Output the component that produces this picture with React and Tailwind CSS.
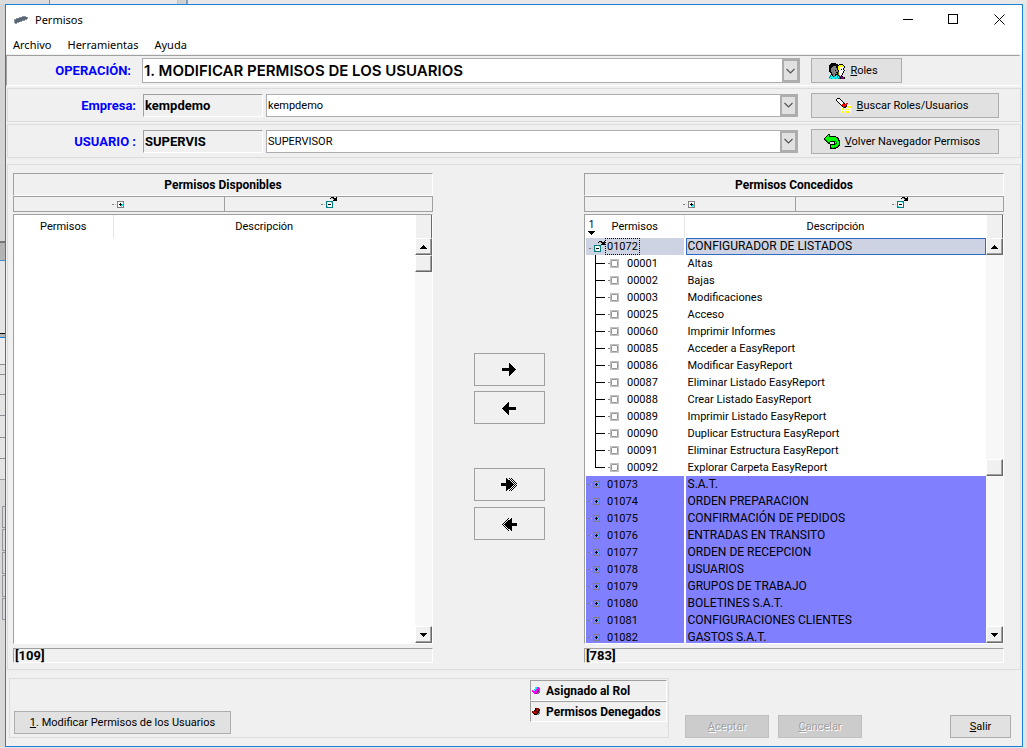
import clsx from 'clsx';

const GRANTED = [
    { code: '01072', name: 'CONFIGURADOR DE LISTADOS', kind: 'open' },
    { code: '00001', name: 'Altas', kind: 'leaf' },
    { code: '00002', name: 'Bajas', kind: 'leaf' },
    { code: '00003', name: 'Modificaciones', kind: 'leaf' },
    { code: '00025', name: 'Acceso', kind: 'leaf' },
    { code: '00060', name: 'Imprimir Informes', kind: 'leaf' },
    { code: '00085', name: 'Acceder a EasyReport', kind: 'leaf' },
    { code: '00086', name: 'Modificar EasyReport', kind: 'leaf' },
    { code: '00087', name: 'Eliminar Listado EasyReport', kind: 'leaf' },
    { code: '00088', name: 'Crear Listado EasyReport', kind: 'leaf' },
    { code: '00089', name: 'Imprimir Listado EasyReport', kind: 'leaf' },
    { code: '00090', name: 'Duplicar Estructura EasyReport', kind: 'leaf' },
    { code: '00091', name: 'Eliminar Estructura EasyReport', kind: 'leaf' },
    { code: '00092', name: 'Explorar Carpeta EasyReport', kind: 'leaf', last: true },
    { code: '01073', name: 'S.A.T.', kind: 'closed' },
    { code: '01074', name: 'ORDEN PREPARACION', kind: 'closed' },
    { code: '01075', name: 'CONFIRMACIÓN DE PEDIDOS', kind: 'closed' },
    { code: '01076', name: 'ENTRADAS EN TRANSITO', kind: 'closed' },
    { code: '01077', name: 'ORDEN DE RECEPCION', kind: 'closed' },
    { code: '01078', name: 'USUARIOS', kind: 'closed' },
    { code: '01079', name: 'GRUPOS DE TRABAJO', kind: 'closed' },
    { code: '01080', name: 'BOLETINES S.A.T.', kind: 'closed' },
    { code: '01081', name: 'CONFIGURACIONES CLIENTES', kind: 'closed' },
    { code: '01082', name: 'GASTOS S.A.T.', kind: 'closed' },
];

const PALETTE = {
    k: '#000000', g: '#808080', a: '#969696', l: '#c0c0c0', w: '#ffffff', y: '#ffff00', o: '#808000',
    r: '#ff0000', m: '#800000', t: '#008080', c: '#00ffff', n: '#00ff00', d: '#008000',
    p: '#800080', f: '#ff00ff', s: '#5a6674', b: '#8b97a3',
};

// Draws a small bitmap, one character per pixel
function Pixels({ rows, className }) {
    return (
        <svg width={rows[0].length} height={rows.length} shapeRendering="crispEdges" className={clsx('shrink-0', className)} aria-hidden="true">
            {rows.map((row, y) =>
                [...row].map((ch, x) => PALETTE[ch] && <rect key={`${x}-${y}`} x={x} y={y} width="1" height="1" fill={PALETTE[ch]} />)
            )}
        </svg>
    );
}

const APP_ICON = [
    '........bbbb..',
    '.....bbssssssb',
    '..bbsssssssssb',
    'bbsssssssssbb.',
    'bsssssssbbb...',
    'bsssssbb......',
    'bssbb.........',
    '.bb...........',
];

const ROLES_ICON = [
    '..kkkkk.........',
    '.kkkkkkkk.kkkk..',
    'kkkkkkkkkkyyyyk.',
    'kkkkgggkkyyyyyyk',
    'kkkggggkkyywwwyk',
    'kkggggggkywwwwk.',
    'kkggggggkywwkwk.',
    'kkggggkggkwwwwwk',
    'kkgggggggkwwwwk.',
    '.kkggggkkowwwwk.',
    '..kgggggkoywwk..',
    '..kkggkkkowwwk..',
    '.tckggkctkowk...',
    'ctcckgcctckppk..',
    'tccccccctctkpppk',
    'cctccctccttkpppk',
];

const SEARCH_ICON = [
    '.kkk...........',
    'kwwwk..........',
    'kwwwwk.........',
    '.kwwwwk........',
    '..kwwwwk.......',
    '...kwwwrk.rr...',
    '....kwrrrrr....',
    '.....krrrrkwwww',
    '......krrkkyywy',
    '.....wwrkkwyywy',
    '.....wyywwwwwww',
    '.....wyywyywyyw',
    '.....wwwwwwwwww',
    '.....wyywyywyyw',
    '.....wyywyywyyw',
];

const BACK_ICON = [
    '....kk..........',
    '...knk..........',
    '..knnkkkkkkk....',
    '.knnnnnnnnnnkk..',
    'knnnnnnnnnnnnkk.',
    'kdnnnnnnnnnnnnk.',
    '.kdnnnnnnnnnnnkk',
    '..kdnnkkkkkdnnnk',
    '...kdk....kcdnnk',
    '....kk....ktdnnk',
    '......kkkkktnnnk',
    '......knnnnnnnkk',
    '......knnnnnndk.',
    '......kdnnddkk..',
    '......kkkkkk....',
];

const EXPAND_ICON = [
    '.....ggggggg',
    '.....gwwwwwg',
    '.....gwwkwwg',
    'gg.l.gwkkkcg',
    '.....gwwkccg',
    '.....gwwwcwg',
    '.....ggggggg',
];

const NODE_ICON = [
    '.....ggggggg',
    '.....g.....g',
    '.....g..k..g',
    'gg.l.g.kkkcg',
    '.....g..kc.g',
    '.....g.....g',
    '.....ggggggg',
];

const COLLAPSE_ICON = [
    '..........kkk..k',
    '.........kllkkkk',
    '............lkkk',
    '............kkkk',
    '.....ttttttt....',
    '.....twwwwct....',
    '.....twwwwwt....',
    'gg.l.twkkkwt....',
    '.....twwwwwt....',
    '.....tcwwwwt....',
    '.....ttttttt....',
];

const LEAF_ICON = [
    '..lllllllll',
    '..llaaaaall',
    '..lawwwwwal',
    '..lawwwwwal',
    'gglawwwwwal',
    '..lawwwwwal',
    '..lawwwwwal',
    '..llaaaaall',
    '..lllllllll',
];

const ROLE_DOT = [
    '.wwccff.',
    'wwwccfff',
    'wwccffff',
    'fccfffpg',
    'fffffppg',
    '.ffffpgg',
    '..fppgg.',
];

const DENIED_DOT = [
    '.wwkmmm.',
    'wwwkmrmm',
    'wwkmmrmk',
    'mrmmmmkg',
    'mmrmmmkg',
    '.mmmmkgg',
    '..kkkgg.',
];

function Arrow({ left, double }) {
    return (
        <svg width="16" height="14" shapeRendering="crispEdges" className={clsx(left && 'rotate-180')} aria-hidden="true">
            <pattern id="dither" width="2" height="2" patternUnits="userSpaceOnUse">
                <rect width="1" height="1" />
                <rect x="1" y="1" width="1" height="1" />
            </pattern>
            {double ? (
                <>
                    <path d="M8 0h2l6 6v1l-6 6H8z" fill="url(#dither)" />
                    <path d="M0 5h5V0l7 6.500-7 6.500V8H0z" />
                </>
            ) : (
                <path d="M1 5h7V0l7 6.500-7 6.500V8H1z" />
            )}
        </svg>
    );
}

function Combo({ id, value, big, className }) {
    return (
        <div className={clsx('flex min-w-0 flex-1 border border-[#adadb3] bg-white', className)}>
            <select
                id={id}
                className={clsx(
                    'min-w-0 flex-1 appearance-none bg-white pl-px outline-none',
                    big && 'pb-px font-[Inter,sans-serif] text-[15px] font-semibold'
                )}
            >
                <option>{value}</option>
            </select>
            <span className="flex w-[17px] shrink-0 items-center justify-center border-2 border-[#adadad] bg-[#e1e1e1]">
                <svg width="9" height="6" fill="none" stroke="#555" strokeWidth="1.200" aria-hidden="true">
                    <path d="M.5 1l4 4 4-4" />
                </svg>
            </span>
        </div>
    );
}

function Button({ children, className, disabled }) {
    return (
        <button
            type="button"
            disabled={disabled}
            className={clsx(
                'flex shrink-0 items-center justify-center border',
                disabled
                    ? 'border-[#bfbfbf] bg-[#cccccc] text-[#a0a0a0] [text-shadow:1px_1px_0_#fff]'
                    : 'border-[#adadad] bg-[#e1e1e1]',
                className
            )}
        >
            {children}
        </button>
    );
}

function FieldRow({ id, label, code, value, children }) {
    return (
        <div className="mx-px flex h-[34px] items-center border border-[#dcdcdc]">
            <label htmlFor={id} className="w-32 shrink-0 text-right text-[13px] font-bold text-[#0000ff]">{label}</label>
            <input
                aria-label={label}
                readOnly
                value={code}
                className="ml-[7px] h-[23px] w-[120px] shrink-0 border border-t-[#a0a0a0] border-r-white border-b-white border-l-[#a0a0a0] bg-[#f0f0f0] pl-px text-[13px] font-bold outline-none"
            />
            <Combo id={id} value={value} className="ml-[3px] h-[23px]" />
            <div className="ml-[13px] w-[209px] shrink-0">{children}</div>
        </div>
    );
}

function ScrollButton({ down }) {
    return (
        <button
            type="button"
            aria-label={down ? 'Bajar' : 'Subir'}
            className="flex h-[17px] w-[17px] shrink-0 items-center justify-center border border-t-white border-r-[#696969] border-b-[#696969] border-l-white bg-[#f0f0f0] shadow-[inset_-1px_-1px_0_#a0a0a0]"
        >
            <svg width="7" height="4" shapeRendering="crispEdges" aria-hidden="true">
                <path d={down ? 'M0 0h7L3.500 4z' : 'M0 4h7L3.500 0z'} />
            </svg>
        </button>
    );
}

function ScrollBar({ atTop }) {
    return (
        <div className="flex w-[17px] shrink-0 flex-col bg-[#f7f7f7]">
            <div className="h-[23px] shrink-0 border-r border-l border-r-[#696969] border-l-white bg-[#f0f0f0]" />
            <ScrollButton />
            {!atTop && <div className="min-h-0 grow-[204]" />}
            <div className="h-[17px] shrink-0 border border-t-white border-r-[#696969] border-b-[#696969] border-l-white bg-[#f0f0f0] shadow-[inset_-1px_-1px_0_#a0a0a0]" />
            <div className="min-h-0 grow-[150]" />
            <ScrollButton down />
        </div>
    );
}

function TreeCell({ row }) {
    if (row.kind === 'open') {
        return (
            <div className="flex h-[17px] items-center pl-[3px]">
                <Pixels rows={COLLAPSE_ICON} />
                <span className="border border-dotted border-black px-px leading-[15px]">{row.code}</span>
            </div>
        );
    }
    if (row.kind === 'leaf') {
        return (
            <div className="flex h-[17px] items-center pl-[9px]">
                <svg width="13" height="17" shapeRendering="crispEdges" aria-hidden="true">
                    <path d={row.last ? 'M0 0h1v8h9v1H0z' : 'M0 0h1v8h9v1H1v8H0z'} />
                </svg>
                <Pixels rows={LEAF_ICON} />
                <span className="ml-2">{row.code}</span>
            </div>
        );
    }
    return (
        <div className="flex h-[17px] items-center pl-[2px]">
            <Pixels rows={NODE_ICON} />
            <span className="ml-[7px]">{row.code}</span>
        </div>
    );
}

function PermissionList({ title, rows, total, sorted }) {
    return (
        <section className="flex min-w-0 flex-1 flex-col">
            <h2 className="flex h-[23px] shrink-0 items-center justify-center border border-t-[#a0a0a0] border-r-white border-b-white border-l-[#a0a0a0] text-xs font-bold">
                {title}
            </h2>
            <div className="flex h-4 shrink-0 border border-[#a0a0a0]">
                <button type="button" aria-label="Expandir" className="flex flex-1 items-center justify-center border-r border-[#a0a0a0] pr-[3px]">
                    <Pixels rows={EXPAND_ICON} />
                </button>
                <button type="button" aria-label="Contraer" className="flex flex-1 items-start justify-center">
                    <Pixels rows={COLLAPSE_ICON} />
                </button>
            </div>
            <div className="mt-[2px] flex min-h-0 flex-1 border border-t-[#a0a0a0] border-r-white border-b-white border-l-[#a0a0a0] bg-white">
                <div className="min-w-0 flex-1 overflow-hidden">
                    <table className="w-full table-fixed border-collapse">
                        <thead>
                            <tr className="h-[23px]">
                                <th className="w-[99px] border-r border-[#e5e5e5] p-0 font-normal">
                                    <div className="flex items-center justify-center">
                                        {sorted && (
                                            <span className="flex w-3 flex-col items-center text-[10px] leading-[12px]">
                                                1
                                                <svg width="7" height="4" shapeRendering="crispEdges" aria-hidden="true">
                                                    <path d="M0 0h7L3.500 4z" />
                                                </svg>
                                            </span>
                                        )}
                                        <span className={clsx('flex-1', sorted && 'pr-3')}>Permisos</span>
                                    </div>
                                </th>
                                <th className="p-0 font-normal">Descripción</th>
                            </tr>
                        </thead>
                        <tbody>
                            {rows.map((row) => (
                                <tr key={row.code} className="h-[17px]">
                                    <td
                                        className={clsx(
                                            'border-r-2 border-l border-white p-0',
                                            row.kind === 'open' && 'bg-[#cdd3e2]',
                                            row.kind === 'closed' && 'bg-[#8080ff]'
                                        )}
                                    >
                                        <TreeCell row={row} />
                                    </td>
                                    <td
                                        className={clsx(
                                            'p-0',
                                            row.kind === 'open' && 'bg-[#cdd3e2]',
                                            row.kind === 'closed' && 'bg-[#8080ff]'
                                        )}
                                    >
                                        <div
                                            className={clsx(
                                                'h-[17px] border px-px whitespace-nowrap',
                                                row.kind === 'open' ? 'border-[#316ac5]' : 'border-transparent',
                                                row.kind === 'leaf' ? 'leading-4' : 'text-xs/[15px]'
                                            )}
                                        >
                                            {row.name}
                                        </div>
                                    </td>
                                </tr>
                            ))}
                        </tbody>
                    </table>
                </div>
                <ScrollBar atTop={!sorted} />
            </div>
            <div className="mt-1 h-[15px] shrink-0 border border-t-[#a0a0a0] border-r-white border-b-white border-l-[#a0a0a0] pl-px text-[13px] leading-[14px] font-bold">
                {total}
            </div>
        </section>
    );
}

function MoveButton({ label, className, ...arrow }) {
    return (
        <button type="button" aria-label={label} className={clsx('flex h-[33px] w-[71px] items-center justify-center border border-[#a0a0a0] pr-[2px]', className)}>
            <Arrow {...arrow} />
        </button>
    );
}

function LegendItem({ icon, children }) {
    return (
        <div className="flex h-[21px] items-center gap-[6px] border border-t-[#a0a0a0] border-r-white border-b-white border-l-[#a0a0a0] pl-px text-xs font-bold whitespace-nowrap">
            <Pixels rows={icon} />
            <span>{children}</span>
        </div>
    );
}

// Edge of the windows that lie behind the dialog
function Backdrop() {
    return (
        <div className="flex w-[5px] shrink-0 flex-col overflow-hidden bg-[#d9d9d9]" aria-hidden="true">
            <div className="h-[237px] bg-[#d4d4d4]" />
            <div className="h-[2px] bg-[#777]" />
            <div className="h-[17px] bg-[#b4b4b4]" />
            <div className="h-px bg-[#4a90d0]" />
            <div className="h-[72px] bg-[#e4e4e4]" />
            <div className="h-px bg-black" />
            <div className="h-[3px] bg-[#b4b4b4]" />
            <div className="h-px bg-[#1a80d8]" />
            <div className="h-[26px] bg-[#ececec]" />
            {[10, 20, 21, 22, 21, 21].map((height, i) => (
                <div key={i} className="border-t border-[#8f8f96] bg-[#e4e4e4]" style={{ height }} />
            ))}
            <div className="h-[27px] border-t border-[#a0a0a0]" />
            {[0, 1, 2, 3, 4].map((i) => (
                <div key={i} className="mb-px ml-[2px] h-[22px] border border-r-0 border-[#95959c]" />
            ))}
        </div>
    );
}

export default function App() {
    return (
        <div className="flex h-screen min-h-[600px] flex-col bg-[#e3e3e3] font-[Roboto,sans-serif] text-[11px] leading-[17px] text-black">
            <div className="flex h-1 shrink-0" aria-hidden="true">
                <div className="w-[50px] border-r border-[#8f8f8f] bg-[#dcdcdc]" />
                <div className="w-32 border-r border-[#c4c4c4] bg-[#e8e8e8]" />
                <div className="w-[10px] border-r-2 border-[#7f9db9] bg-[#d0d0d0]" />
                <div className="flex-1 bg-[#e8e8e8]" />
            </div>
            <div className="flex min-h-0 flex-1 pb-px">
                <Backdrop />
                <main className="mr-1 flex min-w-0 flex-1 flex-col border border-[#1a80d8] bg-[#f0f0f0]">
                    <header className="h-[49px] shrink-0 bg-white font-[Noto_Sans,sans-serif]">
                        <div className="flex h-[29px] items-center pl-2">
                            <Pixels rows={APP_ICON} />
                            <h1 className="ml-[7px] flex-1">Permisos</h1>
                            <div className="flex items-center">
                                <button type="button" aria-label="Minimizar" className="flex w-[45px] justify-center">
                                    <svg width="11" height="11" shapeRendering="crispEdges"><path d="M0 5h10v1H0z" /></svg>
                                </button>
                                <button type="button" aria-label="Maximizar" className="flex w-[45px] justify-center">
                                    <svg width="11" height="11" fill="none" stroke="#000" shapeRendering="crispEdges"><path d="M.5.5h9v9h-9z" /></svg>
                                </button>
                                <button type="button" aria-label="Cerrar" className="flex w-[46px] justify-center">
                                    <svg width="11" height="11" stroke="#000"><path d="M.5.5l10 10M10.500.5l-10 10" /></svg>
                                </button>
                            </div>
                        </div>
                        <nav className="flex h-5 items-center gap-4 pl-[7px]">
                            <button type="button">Archivo</button>
                            <button type="button">Herramientas</button>
                            <button type="button">Ayuda</button>
                        </nav>
                    </header>

                    <div className="mt-px mr-[2px] flex h-[31px] shrink-0 items-center border border-t-[#a0a0a0] border-r-[#f0f0f0] border-b-white border-l-[#a0a0a0]">
                        <label htmlFor="operacion" className="w-[124px] shrink-0 text-right text-[13px] font-bold text-[#0000ff]">OPERACIÓN:</label>
                        <Combo id="operacion" value="1. MODIFICAR PERMISOS DE LOS USUARIOS" big className="ml-[11px] h-[25px]" />
                        <div className="ml-[11px] w-52 shrink-0">
                            <Button className="h-[25px] w-[91px] gap-[5px] pr-[6px]"><Pixels rows={ROLES_ICON} /><span><u>R</u>oles</span></Button>
                        </div>
                    </div>

                    <div className="mt-[2px] flex shrink-0 flex-col gap-[2px]">
                        <FieldRow id="empresa" label="Empresa:" code="kempdemo" value="kempdemo">
                            <Button className="h-[25px] w-[188px] gap-[6px] pr-[6px]"><Pixels rows={SEARCH_ICON} /><span><u>B</u>uscar Roles/Usuarios</span></Button>
                        </FieldRow>
                        <FieldRow id="usuario" label="USUARIO :" code="SUPERVIS" value="SUPERVISOR">
                            <Button className="h-[25px] w-[188px] gap-[5px] pr-[6px]"><Pixels rows={BACK_ICON} /><span><u>V</u>olver Navegador Permisos</span></Button>
                        </FieldRow>
                    </div>

                    <div className="mx-px mt-[6px] flex min-h-0 flex-1 border border-[#dcdcdc] pt-2 pr-4 pb-[6px] pl-[5px]">
                        <PermissionList title="Permisos Disponibles" rows={[]} total="[109]" />
                        <div className="flex w-[151px] shrink-0 flex-col items-center pt-[180px] pl-[2px]">
                            <MoveButton label="Conceder" />
                            <MoveButton label="Quitar" left className="mt-[5px]" />
                            <MoveButton label="Conceder todos" double className="mt-11" />
                            <MoveButton label="Quitar todos" left double className="mt-[6px]" />
                        </div>
                        <PermissionList title="Permisos Concedidos" rows={GRANTED} total="[783]" sorted />
                    </div>

                    <footer className="flex shrink-0 items-end pt-2 pr-[11px] pb-2 pl-[3px]">
                        <div className="flex h-[60px] min-w-0 flex-1 items-start border border-[#dcdcdc] pt-px pr-px pl-1">
                            <Button className="mt-[31px] h-[23px] w-[217px]"><span><u>1</u>. Modificar Permisos de los Usuarios</span></Button>
                            <div className="ml-auto w-[137px] shrink-0">
                                <LegendItem icon={ROLE_DOT}>Asignado al Rol</LegendItem>
                                <LegendItem icon={DENIED_DOT}>Permisos Denegados</LegendItem>
                            </div>
                        </div>
                        <Button disabled className="ml-4 h-[23px] w-[84px]"><span><u>A</u>ceptar</span></Button>
                        <Button disabled className="ml-[9px] h-[23px] w-[84px]"><span><u>C</u>ancelar</span></Button>
                        <Button className="ml-[88px] h-[23px] w-[61px]"><span><u>S</u>alir</span></Button>
                    </footer>
                </main>
            </div>
        </div>
    );
}
